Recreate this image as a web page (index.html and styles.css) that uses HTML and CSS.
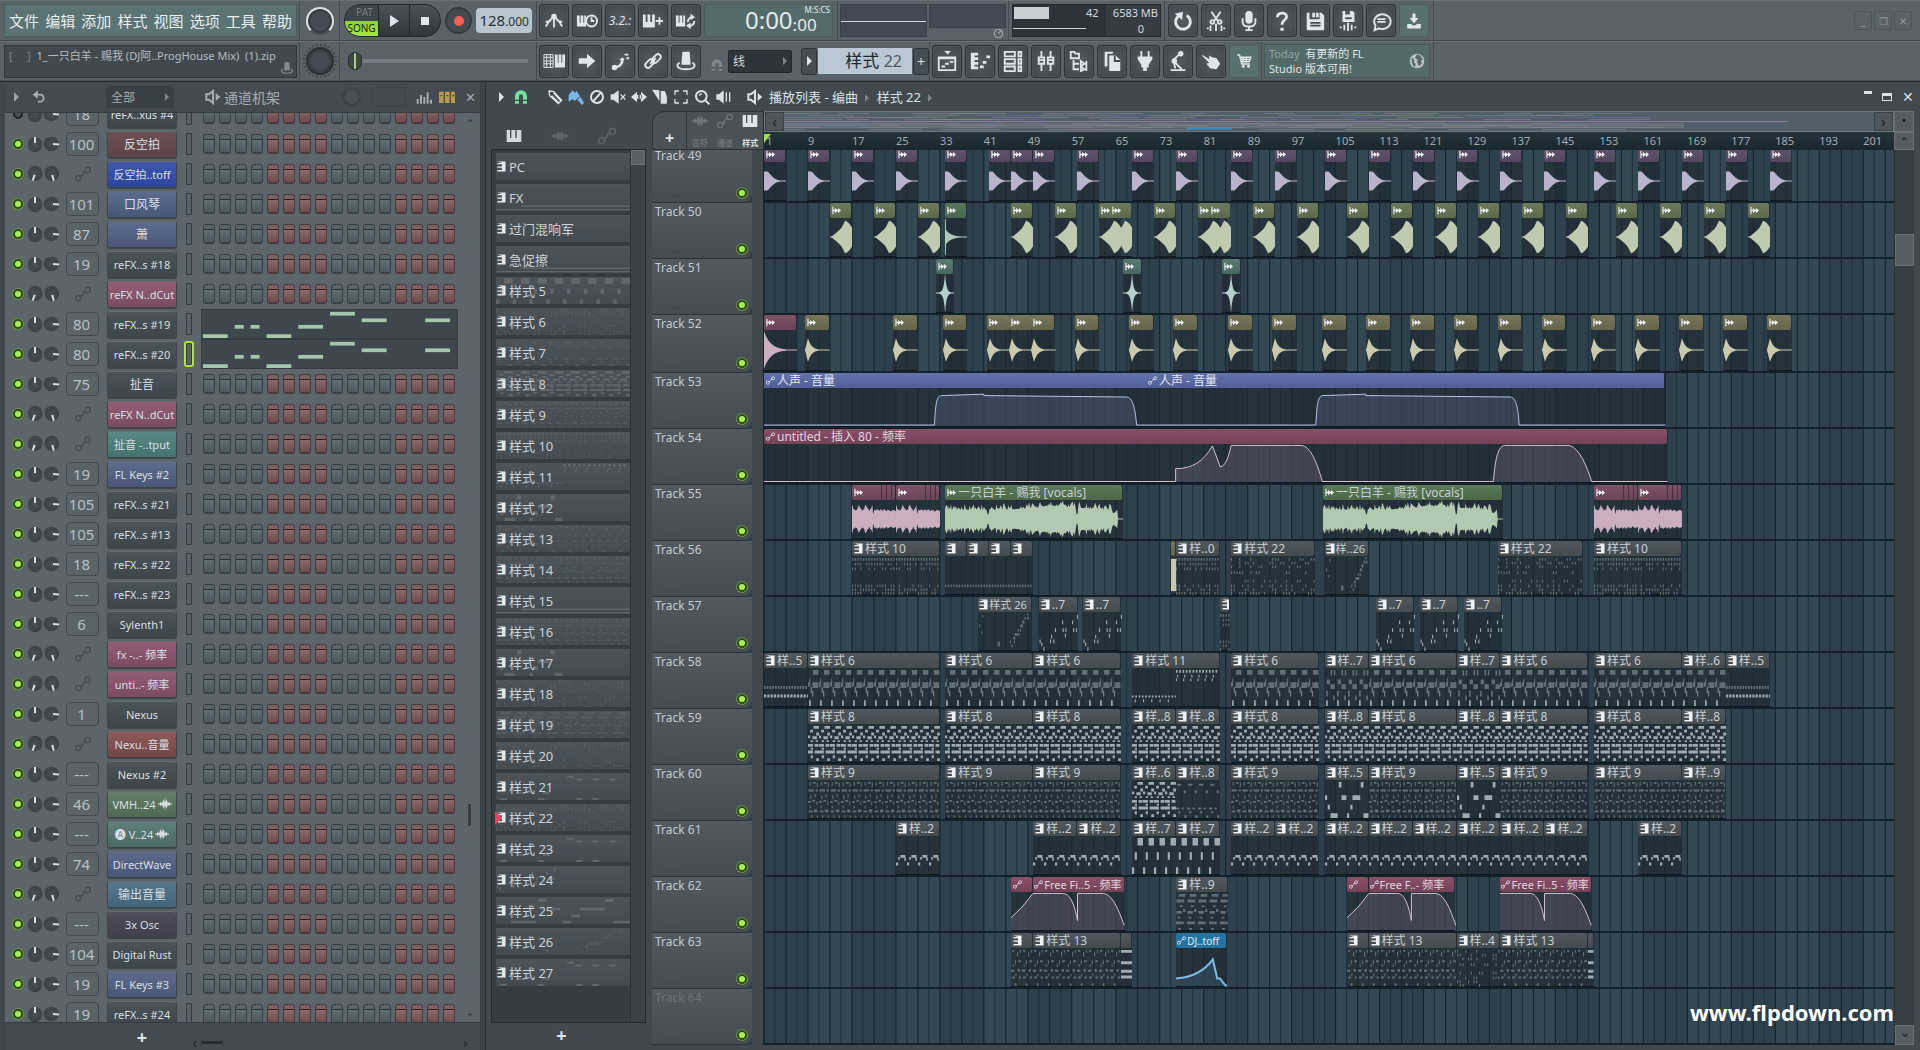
FILE: index.html
```
<!DOCTYPE html>
<html lang="zh-CN">
<head>
  <meta charset="UTF-8" />
  <meta name="viewport" content="width=device-width, initial-scale=1.0"/>
  <title>FL Studio</title>
  <link rel="stylesheet" href="styles.css">
</head>
<body>

<!-- icon sprite -->
<svg class="sprite" aria-hidden="true">
  <symbol id="i-metronome" viewBox="0 0 24 24"><path class="l" d="M12 5v14M12 7C8 10 5 14 3 18M12 7c4 3 7 7 9 11M3 13l5-1M16 12l5 1"/><circle cx="12" cy="7" r="3"/></symbol>
  <symbol id="i-wait" viewBox="0 0 24 24"><path d="M1 6h3v8h1V6h3v8h1V6h2v12H1z"/><circle class="l" cx="17" cy="12" r="6"/><path class="l" d="M17 8v4h3"/></symbol>
  <symbol id="i-pianoplus" viewBox="0 0 24 24"><path d="M1 5h3v8h2V5h3v8h2V5h3v14H1zM18 8h2v3h3v2h-3v3h-2v-3h-3v-2h3z"/></symbol>
  <symbol id="i-pianoloop" viewBox="0 0 24 24"><path d="M1 6h3v8h1V6h3v8h1V6h2v12H1z"/><path class="l" d="M20 8a5 5 0 0 0-6 5M14 17a5 5 0 0 0 7-5"/><path d="M17 4l5 4-5 3zM17 14l-5 3 5 4z"/></symbol>
  <symbol id="i-typing" viewBox="0 0 24 24"><path d="M13 5h3v9h1V5h3v9h1V5h3v14H13z"/><path class="t" d="M1 5h10v14H1zM1 8h10M1 12h10M1 15h10M4 5v14M8 5v14"/></symbol>
  <symbol id="i-right" viewBox="0 0 24 24"><path d="M3 9h9V4l9 8-9 8v-5H3z"/></symbol>
  <symbol id="i-slide" viewBox="0 0 24 24"><path d="M4 18c5 0 9-2 9-7h-2l4-3 2 3h-1c0 6-5 9-10 10z"/><circle cx="6" cy="19" r="3"/><path d="M17 4h4v2h-4zM19 8h3v2h-3z"/></symbol>
  <symbol id="i-link" viewBox="0 0 24 24"><g class="l"><rect x="3" y="12" width="11" height="6" rx="3" transform="rotate(-45 8 15)"/><rect x="10" y="6" width="11" height="6" rx="3" transform="rotate(-45 16 9)"/><path d="M9 15l6-6"/></g></symbol>
  <symbol id="i-pedal" viewBox="0 0 24 24"><path d="M8 2h8l1 14H7z"/><path class="l" d="M5 14c-5 3-2 7 7 7s12-4 7-7"/></symbol>
  <symbol id="i-playlist" viewBox="0 0 24 24"><path d="M9 1h7l-3 4zM3 8h18v2H3zM6 17h4v2H6zM10 14h4v2h-4zM15 12h4v2h-4z"/><path class="l" d="M3 8h18v14H3z"/></symbol>
  <symbol id="i-roll" viewBox="0 0 24 24"><path d="M2 3h8v3H6v2h4v3H6v2h4v3H6v2h4v3H2zM12 17h4v3h-4zM15 12h4v3h-4zM19 6h4v3h-4z"/></symbol>
  <symbol id="i-rack" viewBox="0 0 24 24"><path class="l" d="M3 2h11v5H3zM3 10h11v5H3zM3 18h11v5H3zM18 2h3v5h-3zM18 10h3v5h-3zM18 18h3v5h-3z"/></symbol>
  <symbol id="i-mixer" viewBox="0 0 24 24"><path class="l" d="M7 1v7M7 15v8M17 1v7M17 15v8M4 8h6v7H4zM14 8h6v7h-6zM4 11h6M14 11h6"/></symbol>
  <symbol id="i-browser" viewBox="0 0 24 24"><path class="l" d="M3 2h4l1 2h4v5H3zM6 11v10h6M6 15h6M14 12v6l4-3zM20 12v6M14 18v5l4-2zM20 18v5"/></symbol>
  <symbol id="i-files" viewBox="0 0 24 24"><path d="M4 2h9v2H7v14H4z"/><path d="M9 6h7l5 5v12H9z"/><path class="k" d="M15 6v6h6"/></symbol>
  <symbol id="i-plug" viewBox="0 0 24 24"><path d="M7 1h2v6h6V1h2v6h3v3l-4 6v3h-2v4h-4v-4H8v-3l-4-6V7h3z"/></symbol>
  <symbol id="i-lamp" viewBox="0 0 24 24"><path class="l" d="M4 22h16M9 20L7 11l6-6M8 13l8 8"/><circle cx="15" cy="4" r="3"/><circle cx="8" cy="12" r="3"/></symbol>
  <symbol id="i-hand" viewBox="0 0 24 24"><path d="M2 5l8 5V6l3 2 5 1 4 6-4 6-7-1-4-5 3-1-7-7z"/></symbol>
  <symbol id="i-cart" viewBox="0 0 24 24"><path class="l" d="M3 4h3l3 12h11M7 7h14l-2 6H9M11 7v6M15 7v6M8 10h12"/><circle cx="11" cy="19" r="2"/><circle cx="18" cy="19" r="2"/></symbol>
  <symbol id="i-undo" viewBox="0 0 24 24"><path class="w" d="M8 6a8 8 0 1 0 8 0"/><path d="M3 4l9-2-1 9z"/></symbol>
  <symbol id="i-cut" viewBox="0 0 24 24"><path class="l" d="M7 2l7 10M17 2l-7 10M3 19v2M6 17v6M12 15v8M18 17v6M21 19v2"/><circle class="l" cx="8" cy="13" r="2"/><circle class="l" cx="16" cy="13" r="2"/></symbol>
  <symbol id="i-mic" viewBox="0 0 24 24"><rect x="8" y="1" width="8" height="14" rx="4"/><path class="l" d="M5 9v4q0 5 7 5t7-5V9M12 18v4M8 22h8"/></symbol>
  <symbol id="i-help" viewBox="0 0 24 24"><path class="w" d="M7 8c0-6 10-6 10-1 0 4-5 4-5 9"/><circle cx="12" cy="21" r="2"/></symbol>
  <symbol id="i-save" viewBox="0 0 24 24"><path d="M3 3h3v7h11V3h2l3 3v16H3z"/><path d="M9 3h3v5H9zM13 3h3v5h-3z"/><path class="k" d="M7 14h11M7 17h11"/></symbol>
  <symbol id="i-savenew" viewBox="0 0 24 24"><path d="M6 1h3v4h5V1h3l2 2v10H6z"/><path class="k" d="M9 9h7"/><path class="l" d="M4 18v2M8 16v6M12 14v9M16 16v6M20 18v2"/></symbol>
  <symbol id="i-chat" viewBox="0 0 24 24"><path class="l" d="M5 22l1-5a9 8 0 1 1 4 3zM8 10h9M8 13h9"/></symbol>
  <symbol id="i-download" viewBox="0 0 24 24"><path d="M10 2h4v6h4l-6 7-6-7h4zM3 16h5q4 4 8 0h5v6H3z"/></symbol>
  <symbol id="i-magnet" viewBox="0 0 24 24"><path d="M3 22V11a9 9 0 0 1 18 0v11h-6V11a3 3 0 0 0-6 0v11z"/><path class="k" d="M3 17h6M15 17h6"/></symbol>
  <symbol id="i-pencil" viewBox="0 0 24 24"><path class="l" d="M3 3l7 1 12 13-5 5L4 10zM7 10l11 11M10 6l11 12"/></symbol>
  <symbol id="i-brush" viewBox="0 0 24 24"><path d="M1 9l6-7 3 4 3-3 5 8-8 7-3-3-6 4zM14 16l5-4 5 9-3 3z"/></symbol>
  <symbol id="i-no" viewBox="0 0 24 24"><circle class="w" cx="12" cy="12" r="9"/><path class="w" d="M6 19L18 5"/></symbol>
  <symbol id="i-mute" viewBox="0 0 24 24"><path d="M1 8h4l8-6v20l-8-6H1z"/><path class="l" d="M16 8l7 8M23 8l-7 8"/></symbol>
  <symbol id="i-slip" viewBox="0 0 24 24"><path d="M0 12l9-8v16zM24 12l-9-8v16zM8 9h3v6H8zM13 9h3v6h-3z"/></symbol>
  <symbol id="i-slice" viewBox="0 0 24 24"><path d="M0 1l11 1v16zM13 3h6q5 8 3 19h-9z"/></symbol>
  <symbol id="i-select" viewBox="0 0 24 24"><path class="l" d="M3 9V3h6M15 3h6v6M21 15v6h-6M9 21H3v-6"/></symbol>
  <symbol id="i-zoom" viewBox="0 0 24 24"><circle class="w" cx="11" cy="11" r="8"/><path class="w" d="M17 17l6 6"/><path class="l" d="M8 10q1-3 4-3"/></symbol>
  <symbol id="i-playback" viewBox="0 0 24 24"><path d="M2 8h4l7-6v20l-7-6H2z"/><path class="l" d="M17 5v14M22 5v14"/></symbol>
  <symbol id="i-speaker" viewBox="0 0 24 24"><path class="w" d="M2 8h4l6-5v18l-6-5H2z"/><path d="M16 6l7 6-7 6z"/></symbol>
  <symbol id="i-back" viewBox="0 0 24 24"><path class="w" d="M5 8h9a5 5 0 0 1 0 12h-4"/><path d="M10 1v14L1 8z"/></symbol>
  <symbol id="i-bars" viewBox="0 0 24 24"><path d="M1 15h3v7H1zM6 9h3v13H6zM11 12h3v10h-3zM16 5h3v17h-3zM21 16h3v6h-3z"/></symbol>
  <symbol id="i-steps" viewBox="0 0 24 24"><path d="M0 4h7v17H0zM9 4h7v17H9zM18 4h6v17h-6z"/><path class="k" d="M2 10h3M11 10h3M20 10h3"/></symbol>
  <symbol id="i-piano" viewBox="0 0 24 24"><path d="M1 3h5v12h2V3h6v12h2V3h7v18H1z"/></symbol>
  <symbol id="i-wave" viewBox="0 0 24 24"><path d="M0 11h3l2-3 2 3 2-7 2 5 1-8 1 8 2-5 2 7 2-3 2 3h3v2h-3l-2 3-2-3-2 7-2-5-1 8-1-8-2 5-2-7-2 3-2-3H0z"/></symbol>
  <symbol id="i-auto" viewBox="0 0 24 24"><circle class="l" cx="5" cy="18" r="4"/><circle class="l" cx="19" cy="6" r="4"/><path class="l" d="M7 16q4 0 5-4t5-4"/></symbol>
  <symbol id="i-pat" viewBox="0 0 20 24"><path d="M1 1h18v22H1v-3h10v-5H1v-3h10V7H1V4h10z"/></symbol>
  <symbol id="i-clip" viewBox="0 0 24 24"><path d="M1 2h3v8h4V5l6 5h2V5l8 7-8 7v-5h-2l-6 5v-5H4v8H1z"/></symbol>
  <symbol id="i-dial" viewBox="0 0 24 24"><circle class="w" cx="12" cy="12" r="9"/><path class="w" d="M12 12l5-6"/></symbol>
  <symbol id="i-globe" viewBox="0 0 24 24"><circle cx="12" cy="12" r="11"/><path class="land" d="M12 2l5 2 4 6-3 1 1 5-4 4-3-7 1-3-4-3zM4 7l4 3-1 3 3 4-1 4q-6-4-5-14z"/></symbol>
</svg>

<header class="toolbar">
  <div class="bar-row">
    <div class="group g-menu">
      <nav class="menu">
        <button>文件</button><button>编辑</button><button>添加</button><button>样式</button><button>视图</button><button>选项</button><button>工具</button><button>帮助</button>
      </nav>
    </div>
    <div class="group g-knob"><span class="dial dial-ring"></span></div>
    <div class="group g-transport">
      <div class="transport">
        <button class="patsong"><span class="pat">PAT</span><span class="song">SONG</span></button>
        <button class="tbtn" aria-label="play"><span class="tri"></span></button>
        <button class="tbtn" aria-label="stop"><span class="sq"></span></button>
      </div>
      <button class="rec" aria-label="record"><span></span></button>
      <div class="tempo"><b>128</b>.000</div>
    </div>
    <div class="group g-time">
      <button class="ib" aria-label="metronome"><svg><use href="#i-metronome"/></svg></button>
      <button class="ib" aria-label="wait"><svg><use href="#i-wait"/></svg></button>
      <button class="ib count">3.2.:</button>
      <button class="ib" aria-label="step edit"><svg><use href="#i-pianoplus"/></svg></button>
      <button class="ib" aria-label="loop record"><svg><use href="#i-pianoloop"/></svg></button>
      <div class="clock"><span class="big">0:00</span><span class="sub"><span class="unit">M:S:CS</span><span class="small">:00</span></span></div>
    </div>
    <div class="group g-scope"><div class="scope"></div><div class="scope-side"><div class="scope2"></div><svg><use href="#i-dial"/></svg></div></div>
    <div class="group g-cpu">
      <div class="cpu">
        <div class="cpu-graph"><i></i></div>
        <div class="cpu-load">42</div>
        <div class="cpu-mem"><span>6583 MB</span><span>0</span></div>
      </div>
    </div>
    <div class="group g-tools">
      <button class="ib" aria-label="undo"><svg><use href="#i-undo"/></svg></button>
      <button class="ib" aria-label="cut"><svg><use href="#i-cut"/></svg></button>
      <button class="ib" aria-label="record audio"><svg><use href="#i-mic"/></svg></button>
      <button class="ib" aria-label="help"><svg><use href="#i-help"/></svg></button>
      <button class="ib" aria-label="save"><svg><use href="#i-save"/></svg></button>
      <button class="ib" aria-label="save new"><svg><use href="#i-savenew"/></svg></button>
      <button class="ib" aria-label="about"><svg><use href="#i-chat"/></svg></button>
      <button class="ib teal" aria-label="download"><svg><use href="#i-download"/></svg></button>
    </div>
    <div class="win-btns">
      <button aria-label="minimize">_</button><button aria-label="restore">❐</button><button aria-label="close">✕</button>
    </div>
  </div>

  <div class="bar-row">
    <div class="group g-menu">
      <div class="hint"><span class="dim">[&nbsp;&nbsp;&nbsp;&nbsp;&nbsp;]</span>1_一只白羊 - 赐我 (DJ阿..ProgHouse Mix)&nbsp; (1).zip<svg><use href="#i-pedal"/></svg></div>
    </div>
    <div class="group g-knob"><span class="dial dial-dots"></span></div>
    <div class="group g-transport"><input class="pos" type="range" min="0" max="100" value="0" aria-label="song position"></div>
    <div class="group g-pattern">
      <button class="ib" aria-label="typing keyboard"><svg><use href="#i-typing"/></svg></button>
      <button class="ib" aria-label="step"><svg><use href="#i-right"/></svg></button>
      <button class="ib" aria-label="slide"><svg><use href="#i-slide"/></svg></button>
      <button class="ib" aria-label="link"><svg><use href="#i-link"/></svg></button>
      <button class="ib" aria-label="multilink"><svg><use href="#i-pedal"/></svg></button>
      <svg class="snap-icon"><use href="#i-magnet"/></svg>
      <div class="drop"><select class="snap" aria-label="snap"><option>线</option></select><i class="tri xs"></i></div>
      <button class="nudge" aria-label="pattern menu"><span class="tri s"></span></button>
      <div class="pattern-name">样式 <span>22</span></div>
      <button class="nudge plus">+</button>
    </div>
    <div class="group g-views">
      <button class="ib" aria-label="playlist"><svg><use href="#i-playlist"/></svg></button>
      <button class="ib" aria-label="piano roll"><svg><use href="#i-roll"/></svg></button>
      <button class="ib" aria-label="channel rack"><svg><use href="#i-rack"/></svg></button>
      <button class="ib" aria-label="mixer"><svg><use href="#i-mixer"/></svg></button>
      <button class="ib" aria-label="browser"><svg><use href="#i-browser"/></svg></button>
      <button class="ib" aria-label="files"><svg><use href="#i-files"/></svg></button>
      <button class="ib" aria-label="plugins"><svg><use href="#i-plug"/></svg></button>
      <button class="ib" aria-label="tempo tapper"><svg><use href="#i-lamp"/></svg></button>
      <button class="ib" aria-label="touch"><svg><use href="#i-hand"/></svg></button>
      <button class="ib teal" aria-label="shop"><svg><use href="#i-cart"/></svg></button>
    </div>
    <div class="group g-news">
      <a class="news" href="#"><span><em>Today</em>&nbsp; 有更新的 FL<br>Studio 版本可用!</span><svg><use href="#i-globe"/></svg></a>
    </div>
  </div>
</header>

<main class="workspace">
  <section class="rack">
    <div class="rack-head">
      <span class="tri s dim"></span>
      <svg class="back"><use href="#i-back"/></svg>
      <div class="drop"><select class="filter" aria-label="channel filter"><option>全部</option></select><i class="tri xs"></i></div>
      <svg class="spk"><use href="#i-speaker"/></svg>
      <h2>通道机架</h2>
      <span class="swing"></span>
      <span class="swing-box"></span>
      <svg><use href="#i-bars"/></svg>
      <svg class="gold"><use href="#i-steps"/></svg>
      <button class="x" aria-label="close">✕</button>
    </div>
    <div class="rack-body">
      <div class="channels" id="channels"></div>
      <div class="vscroll"><span>⌃</span><i></i><span>⌄</span></div>
    </div>
    <div class="rack-foot">
      <button class="add" aria-label="add channel">+</button>
      <div class="hscroll"><span>‹</span><i></i><span>›</span></div>
    </div>
  </section>

  <section class="playlist">
    <div class="pl-head">
      <span class="tri s"></span>
      <svg class="green"><use href="#i-magnet"/></svg>
      <div class="pl-tools">
        <svg><use href="#i-pencil"/></svg><svg class="blue"><use href="#i-brush"/></svg><svg><use href="#i-no"/></svg><svg><use href="#i-mute"/></svg><svg><use href="#i-slip"/></svg><svg><use href="#i-slice"/></svg><svg><use href="#i-select"/></svg><svg><use href="#i-zoom"/></svg><svg><use href="#i-playback"/></svg>
      </div>
      <svg><use href="#i-speaker"/></svg>
      <h2>播放列表 - 编曲 <i class="tri xs"></i> 样式 22 <i class="tri xs"></i></h2>
      <div class="pl-win"><button class="min" aria-label="minimize"></button><button class="max" aria-label="maximize"></button><button aria-label="close">✕</button></div>
    </div>
    <div class="pl-body">
      <aside class="picker">
        <div class="picker-tabs"><svg><use href="#i-piano"/></svg><svg class="off"><use href="#i-wave"/></svg><svg class="off"><use href="#i-auto"/></svg></div>
        <div class="picker-box">
          <ul id="patterns"></ul>
          <div class="picker-scroll"><i></i></div>
        </div>
        <button class="add" aria-label="add pattern">+</button>
      </aside>

      <div class="arrange">
        <div class="corner">
          <button class="add" aria-label="add track">+</button>
          <div class="modes">
            <span><svg><use href="#i-wave"/></svg>音符</span>
            <span><svg><use href="#i-auto"/></svg>通道</span>
            <span class="on"><svg><use href="#i-piano"/></svg>样式</span>
          </div>
        </div>
        <div class="minimap"><button>‹</button><div class="map" id="map"></div><button>›</button></div>
        <div class="cap dot">•</div>
        <div class="ruler" id="ruler"></div>
        <div class="cap">⌃</div>
        <div class="tracks"><div class="track-list" id="tracks"></div></div>
        <div class="tscroll"><i></i><span>⌄</span></div>
        <div class="watermark">www.flpdown.com</div>
      </div>
    </div>
  </section>
</main>

<script src="app.js"></script>
</body>
</html>
```
FILE: styles.css
```
* { box-sizing: border-box; }

body {
    margin: 0;
    min-height: 100vh;
    display: flex;
    flex-direction: column;
    background: #3c444a;
    color: #d3d9dc;
    font-family: "Noto Sans", "Noto Sans CJK SC", sans-serif;
    font-size: 12px;
    overflow: hidden;
}

button, select, input {
    font: inherit;
    color: inherit;
    border: 0;
    padding: 0;
    margin: 0;
    background: none;
}

h2 { margin: 0; font-size: 14px; font-weight: 400; white-space: nowrap; }
ul { margin: 0; padding: 0; list-style: none; }

svg { width: 16px; height: 16px; fill: currentColor; flex: none; }
.sprite { position: absolute; width: 0; height: 0; }
.l { fill: none; stroke: currentColor; stroke-width: 2; }
.t { fill: none; stroke: currentColor; stroke-width: 1; }
.w { fill: none; stroke: currentColor; stroke-width: 3; }
.k { fill: none; stroke: #444c52; stroke-width: 2; }
.land { fill: #56696a; }

.tri {
    display: inline-block;
    border-left: 9px solid #dfe5e8;
    border-top: 6px solid transparent;
    border-bottom: 6px solid transparent;
}
.tri.s { border-width: 5px 0 5px 5px; }
.tri.xs { border-width: 4px 0 4px 4px; border-left-color: #7c868c; margin: 0 4px; }
.tri.dim { border-left-color: #9aa2a6; }
.sq { width: 8px; height: 8px; background: #dfe5e8; }
.add { color: #e3e8ea; font-size: 18px; line-height: 18px; font-weight: 700; }

/* dropdown with its arrow inside the box */
.drop { display: flex; align-items: center; background: #2d343a; border: 1px solid #22282c; border-radius: 2px; flex: none; }
.drop select { appearance: none; flex: 1; min-width: 0; padding-left: 4px; font-size: 12px; }

/* ---------- top toolbar ---------- */
.toolbar { background: #5a6269; border-bottom: 1px solid #272d32; }
.bar-row { display: flex; height: 41px; border-top: 1px solid #687077; border-bottom: 1px solid #434b51; }
.bar-row + .bar-row { height: 40px; }
.group { display: flex; align-items: center; gap: 3px; padding: 0 0 0 2px; border-right: 1px solid #434b51; flex: none; }
.g-menu { width: 300px; padding: 0 2px 0 4px; }
.g-knob { width: 40px; justify-content: center; padding: 0; }
.g-transport { width: 197px; padding: 0 4px; gap: 4px; }
.g-time { width: 301px; }
.g-scope { width: 171px; align-items: flex-start; padding-top: 3px; gap: 2px; }
.g-cpu { width: 156px; padding: 0 3px; }
.g-tools { width: 269px; padding-left: 3px; }
.g-pattern { width: 393px; }
.g-views { width: 332px; }
.g-news { width: 172px; }

.menu {
    display: flex;
    justify-content: space-between;
    width: 293px;
    height: 33px;
    padding: 0 4px;
    background: #5b7375;
    border: 1px solid #4a5e61;
    font-size: 15px;
    color: #e9eeef;
}
.hint {
    display: flex;
    width: 293px;
    height: 33px;
    padding: 1px 2px 1px 4px;
    background: #41494f;
    border: 1px solid #2f363b;
    color: #b4bcc0;
    font-size: 11px;
    white-space: pre;
    line-height: 18px;
}
.hint .dim { color: #7b8489; margin-right: 6px; }
.hint svg { margin-left: auto; width: 14px; align-self: flex-end; color: #868e93; }

.dial { width: 28px; height: 28px; border-radius: 50%; background: radial-gradient(circle, #434c54 55%, #363e45 58%); border: 2px solid #2b3238; }
.dial-ring { border: 2px solid #dde4e7; border-bottom-color: #495157; }
.dial-dots { outline: 2px dotted #424a50; outline-offset: 1px; }

.transport { display: flex; width: 98px; height: 33px; border: 1px solid #23292d; border-radius: 16px; overflow: hidden; background: linear-gradient(#4a5359, #2f363b); }
.patsong { display: flex; flex-direction: column; width: 33px; background: #3d454b; font-size: 10px; line-height: 15px; }
.pat { color: #767e83; width: 33px; height: 16px; padding-left: 6px; }
.song { background: linear-gradient(#8bcf3e, #a9e653); color: #18220a; width: 33px; height: 16px; }
.tbtn { flex: 1; display: flex; align-items: center; justify-content: center; border-left: 1px solid #23292d; }
.rec { width: 27px; height: 27px; border-radius: 50%; background: #434b51; border: 2px solid #33393e; display: flex; align-items: center; justify-content: center; }
.rec span { width: 10px; height: 10px; border-radius: 50%; background: #f0625a; }
.tempo { width: 56px; height: 25px; margin-left: auto; border-radius: 4px; background: #b9c6d0; color: #2a3238; font-size: 12px; line-height: 24px; text-align: center; }
.tempo b { font-size: 15px; font-weight: 400; }

.ib {
    width: 30px;
    height: 33px;
    display: flex;
    align-items: center;
    justify-content: center;
    border: 1px solid #2d3338;
    border-radius: 3px;
    background: radial-gradient(#535c63, #3e464c);
    color: #e0e6e9;
    box-shadow: inset 0 0 0 1px #4b545a;
}
.ib svg { width: 22px; height: 22px; }
.ib.teal { background: #58706f; border-color: #4c6061; box-shadow: none; }
.ib.count { font-size: 12px; font-style: italic; }
.ib.teal svg { width: 18px; height: 18px; }

.clock { display: flex; justify-content: flex-end; width: 129px; height: 33px; padding-right: 2px; background: #546a6b; border: 1px solid #4a5e60; white-space: nowrap; color: #e3eaeb; }
.clock .big { font-size: 24px; line-height: 30px; }
.clock .sub { display: flex; flex-direction: column; }
.clock .unit { font-size: 8px; line-height: 10px; text-align: right; padding-left: 12px; }
.clock .small { font-size: 17px; line-height: 19px; }

.scope { width: 87px; height: 33px; background: linear-gradient(#414a52 16px, #d0d8dc 16px, #d0d8dc 17px, #414a52 17px); border: 1px solid #394148; }
.scope-side { display: flex; flex-direction: column; align-items: flex-end; }
.scope-side svg { width: 11px; height: 11px; margin-right: 2px; color: #9ba3a7; }
.scope2 { width: 77px; height: 24px; background: #414a52; border: 1px solid #394148; }
.cpu { display: flex; width: 150px; height: 33px; background: #2c343a; border: 1px solid #23292d; font-size: 11px; }
.cpu-graph { flex: 1; padding: 2px 1px; background: linear-gradient(transparent 23px, #c8d0d4 23px, #c8d0d4 24px, transparent 24px); }
.cpu-graph i { display: block; width: 35px; height: 12px; background: #c9d0d4; }
.cpu-load { width: 20px; line-height: 16px; }
.cpu-mem { display: flex; flex-direction: column; width: 54px; text-align: right; line-height: 16px; background: #343d44; padding-right: 2px; white-space: nowrap; }
.cpu-mem span + span { padding-right: 14px; }

.win-btns { display: flex; gap: 2px; margin-left: auto; padding: 10px 8px 0 0; }
.win-btns button { width: 18px; height: 19px; border: 1px solid #4d555b; border-radius: 2px; color: #939b9f; font-size: 10px; line-height: 16px; }

.pos { appearance: none; width: 180px; height: 20px; margin-left: 4px; background: linear-gradient(transparent 8px, #737b81 8px, #737b81 12px, transparent 12px); }
.pos::-webkit-slider-thumb { appearance: none; width: 14px; height: 18px; border-radius: 7px; border: 1px solid #22282c; background: linear-gradient(90deg, #3d4a3d 5px, #a9cc8f 5px, #a9cc8f 7px, #3d4a3d 7px); }

.snap-icon { margin: 8px 2px 0 6px; color: #7d868b; width: 14px; }
.g-pattern .drop { width: 64px; height: 23px; margin-left: -1px; }
.nudge { width: 16px; height: 27px; margin-left: 6px; border: 1px solid #2d3338; border-radius: 3px; background: #454d54; display: flex; align-items: center; justify-content: center; }
.nudge.plus { margin: 0 0 0 -2px; font-size: 15px; }
.pattern-name { width: 94px; height: 26px; margin-left: -2px; background: #b9c9d4; color: #20272c; font-size: 17px; line-height: 25px; text-align: right; padding-right: 10px; }
.pattern-name span { color: #4d5961; font-size: 16px; }

.news { display: flex; justify-content: space-between; align-items: center; width: 166px; height: 34px; padding: 0 4px; border: 1px solid #45585a; background: #546a69; color: #dfe6e6; font-size: 11px; line-height: 15px; text-decoration: none; white-space: nowrap; }
.news em { font-style: normal; color: #93a3a3; }
.news svg { color: #b9c3c3; }

/* ---------- channel rack ---------- */
.workspace { flex: 1; display: flex; min-height: 0; }
.rack { width: 485px; flex: none; display: flex; flex-direction: column; border-left: 5px solid #3f474d; border-right: 5px solid #3c4449; background: #434b51; }
.rack-head { display: flex; align-items: center; height: 30px; color: #a5adb1; padding: 0 4px 0 9px; }
.rack-head .back { margin-left: 13px; width: 14px; }
.rack-head .drop { width: 68px; height: 22px; margin-left: 60px; background: #394045; border-color: #394045; }
.rack-head .spk { margin: 0 3px 0 31px; }
.swing { width: 20px; height: 20px; margin-left: 62px; border-radius: 50%; border: 3px solid #3b4348; background: #495157; }
.swing-box { width: 36px; height: 20px; margin: 0 10px; border: 1px solid #3a4147; border-radius: 5px; }
.rack-head .gold { color: #b59a4f; margin: 0 10px 0 7px; }
.x { font-size: 13px; }

.rack-body { flex: 1; display: flex; min-height: 0; overflow: hidden; background: #5c666a; border-top: 1px solid #353c41; }
.channels { width: 454px; height: 0; margin-top: -14px; }
.channel { display: flex; align-items: center; height: 30px; padding-left: 8px; }
.led { appearance: none; width: 10px; height: 10px; border-radius: 50%; border: 2px solid #2e4a20; background: #a6ef52; box-shadow: 0 0 0 1px #6b8f4c; flex: none; }
.led.off { background: #474f54; border-color: #20262a; box-shadow: none; }
.knob { width: 14px; height: 14px; margin-left: 5px; border-radius: 50%; background: radial-gradient(#4a5258, #333b41); box-shadow: 0 1px 1px #2d3338; display: flex; justify-content: center; flex: none; }
.knob + .knob { margin-left: 3px; }
.knob::before { content: ""; width: 2px; height: 6px; background: #d7dde0; }
.knob.r { transform: rotate(95deg); }
.knob.d { transform: rotate(200deg); }
.knob.e { transform: rotate(165deg); }
.mix { width: 33px; height: 24px; margin: 0 9px 0 7px; border: 1px solid #42494e; border-radius: 4px; text-align: center; color: #b7c0c4; background: #596368; font-size: 15px; padding-right: 2px; flex: none; }
.mix-link { width: 33px; margin: 0 9px 0 7px; color: #454d52; display: flex; justify-content: center; }
.name { width: 68px; height: 26px; border-radius: 2px; background: linear-gradient(#4a545a, #3c464b); box-shadow: 0 1px 1px 1px #3c4449, inset 0 1px 0 #656f74; color: #d9dfe2; font-size: 11px; white-space: nowrap; display: flex; align-items: center; justify-content: center; gap: 2px; flex: none; }
.name.cjk { font-size: 12px; }
.name svg { width: 14px; height: 14px; }
.name.brown { background: linear-gradient(#6e5053, #5b4346); }
.name.blue { background: linear-gradient(#4058b0, #2f459b); font-size: 11px; }
.name.slate { background: linear-gradient(#5d6b8c, #4a5878); }
.name.pink { background: linear-gradient(#935f77, #7b4a62); font-size: 11px; }
.name.teal { background: linear-gradient(#5a8a85, #44736f); font-size: 11px; }
.name.red { background: linear-gradient(#8e5b5b, #754646); font-size: 11px; }
.name.green { background: linear-gradient(#647f67, #4f6a51); }
.name.sea { background: linear-gradient(#5f817a, #4a6a63); }
.name.steel { background: linear-gradient(#56788e, #446479); }
.name.plum { background: linear-gradient(#504d5a, #413f4b); }
.sel { width: 6px; height: 22px; margin: 0 11px 0 10px; border: 1px solid #333a3f; background: #586166; border-radius: 1px; flex: none; }
.sel.on { outline: 2px solid #b2e04a; }
.steps { display: flex; gap: 4px; }
.step { width: 12px; height: 20px; border: 1px solid #394147; border-bottom-width: 2px; border-radius: 3px; background: linear-gradient(#59636a 4px, #27303a 4px, #27303a 5px, #616c73 5px, #4c5860); }
.step.hot { border-color: #493a3d; background: linear-gradient(#7a6162 4px, #381a20 4px, #381a20 5px, #8b6a69 5px, #6b4c4e); }
.roll { width: 257px; height: 30px; margin-left: -2px; background: #3e474d; border: 1px solid #353d43; fill: #a5c6ad; }

.vscroll { flex: 1; display: flex; flex-direction: column; align-items: center; justify-content: space-between; color: #2f373c; font-size: 12px; padding: 2px 0; position: relative; }
.vscroll i { position: absolute; top: 76%; width: 3px; height: 22px; background: #363d43; }
.rack-foot { display: flex; height: 29px; border-top: 1px solid #353c41; }
.rack-foot .add { width: 276px; }
.hscroll { width: 290px; display: flex; align-items: center; gap: 4px; margin-left: -86px; padding-top: 10px; color: #20262a; font-size: 14px; }
.hscroll i { width: 22px; height: 3px; background: #272e33; margin-right: 236px; }

/* ---------- playlist ---------- */
.playlist { flex: 1; min-width: 0; display: flex; flex-direction: column; background: #41494f; border-left: 1px solid #2a3035; padding-right: 6px; }
.pl-head { display: flex; align-items: center; height: 29px; padding-left: 13px; color: #dbe1e4; }
.pl-head .green { color: #6fe39b; margin: 0 25px 0 9px; }
.pl-head .blue { color: #77b7ee; }
.pl-tools { display: flex; gap: 5px; margin-right: 16px; margin-left: -7px; }
.pl-head h2 { margin-left: 6px; font-size: 13px; }
.pl-win { display: flex; align-items: center; gap: 10px; margin-left: auto; font-size: 14px; }
.pl-win button { width: 12px; }
.pl-win .min { width: 8px; height: 3px; margin-bottom: 8px; background: #dbe1e4; }
.pl-win .max { height: 8px; width: 10px; border: 1px solid #dbe1e4; border-top-width: 3px; }
.pl-body { flex: 1; display: flex; min-height: 0; }

.picker { width: 160px; flex: none; padding: 0 0 0 5px; display: flex; flex-direction: column; }
.picker-tabs { display: flex; align-items: center; gap: 29px; height: 38px; padding: 11px 0 0 15px; }
.picker-tabs .off { width: 18px; height: 18px; color: #5c656b; }
.picker-box { flex: 1; display: flex; justify-content: space-between; min-height: 0; border: 1px solid #23292e; background: #343d44; }
#patterns { width: 138px; padding: 3px 0 0 4px; }
.pattern { position: relative; display: flex; align-items: center; gap: 3px; height: 27px; margin-bottom: 4px; padding-left: 1px; background: linear-gradient(#4c545a, #434b51); color: #cdd3d6; font-size: 13px; }
.pattern .ico { width: 9px; height: 11px; color: #e3e8ea; }
.pattern .mini { position: absolute; left: 0; top: 0; width: 100%; height: 100%; fill: #8d969b; opacity: .35; }
.pattern.now::before { content: ""; position: absolute; left: -1px; z-index: 1; border-left: 7px solid #e8415a; border-top: 7px solid transparent; border-bottom: 7px solid transparent; }
.picker-scroll { width: 15px; background: #3b4248; border-left: 1px solid #2a3035; }
.picker-scroll i { display: block; height: 15px; background: #596167; border: 1px solid #6a7278; }
.picker > .add { height: 28px; padding-bottom: 4px; margin-right: 14px; }

.arrange { position: relative; flex: 1; min-width: 0; display: grid; grid-template-columns: 112px 1fr 20px; grid-template-rows: 21px 18px 1fr; margin: 0 0 6px 6px; }
.corner { grid-row: 1 / 3; display: flex; background: #4a5258; border-top-left-radius: 12px; border: 1px solid #2b3136; }
.corner .add { width: 34px; padding-top: 14px; border-right: 1px solid #2b3136; font-size: 16px; }
.modes { flex: 1; display: flex; justify-content: space-around; font-size: 8px; font-weight: 700; line-height: 12px; color: #6d767b; padding-top: 1px; }
.modes span { display: flex; flex-direction: column; align-items: center; justify-content: space-between; }
.modes .on { color: #dfe5e8; }
.minimap { display: flex; background: #516068; border: 1px solid #6c767b; }
.minimap button { width: 19px; background: #4d565c; border: 1px solid #394046; font-size: 14px; line-height: 14px; color: #161c20; }
.map { flex: 1; }
.map svg { width: 100%; height: 100%; display: block; }
.cap { background: #555d63; border: 1px solid #697177; color: #14191c; text-align: center; line-height: 18px; overflow: hidden; }
.ruler { position: relative; background: linear-gradient(#23323a, #1b272e); overflow: hidden; border-top: 1px solid #2c343a; }
.ruler span { position: absolute; top: 0; font-size: 11px; line-height: 16px; color: #a0acb2; }
.ruler::before { content: ""; position: absolute; left: 0; top: 1px; z-index: 1; border-top: 9px solid #a5dc4a; border-right: 7px solid transparent; }
.tracks { grid-column: 1 / 3; overflow: hidden; background: #2d404b; min-height: 0; }
.track-list { position: relative; margin-top: -3px; }
.grid { position: absolute; left: 112px; top: 0; width: calc(100% - 112px); height: 100%; }
.grid .band { fill: #344853; }
.grid path { stroke: #122029; stroke-width: 1; vector-effect: non-scaling-stroke; shape-rendering: crispEdges; }
.grid .soft { stroke: #1d2f3a; }
.track { position: relative; display: flex; height: 56px; }
.track.tall { height: 58px; }
.track-head { width: 100px; padding: 0 3px; background: linear-gradient(#525a60, #444c52); border-bottom: 1px solid #2c3338; border-radius: 0 0 8px 0; color: #c3c9cd; line-height: 17px; position: relative; }
.track-head .led { position: absolute; right: 5px; bottom: 4px; }
.track-head small { position: absolute; left: 18px; bottom: 0; color: #343b40; }
.track.empty .track-head { color: #6a7277; }
.gutter { width: 12px; background: #40484e; border-right: 1px solid #1b2329; }
.lane { position: relative; flex: 1; border-bottom: 2px solid #14212a; }

.clip { position: absolute; top: 0; bottom: 0; display: flex; flex-direction: column; background: #1f2930aa; border-bottom: 1px solid #10191f; }
.clip.over { background: none; }
.clip .tag { display: flex; align-items: center; gap: 2px; height: 15px; margin-right: 1px; padding-left: 2px; border-radius: 2px; overflow: hidden; background: linear-gradient(#50585d, #434b50); font-size: 12px; line-height: 14px; white-space: nowrap; color: #c9cfd3; flex: none; }
.clip .tag svg { width: 9px; height: 11px; color: #eef2f4; }
.clip .body { flex: 1; width: 100%; min-height: 0; fill: #9eabb1; overflow: visible; }
.dimn { opacity: .5; }
.clip.tight .tag { font-size: 11px; gap: 1px; padding-left: 1px; }
.clip.mauve .tag { background: linear-gradient(#63536c, #534860); }
.clip.mauve .body { fill: #b9b3cc; }
.clip.olive .tag { background: linear-gradient(#6b7a5a, #5a6a4c); }
.clip.olive .body { fill: #bfcbb1; }
.clip.sage .tag { background: linear-gradient(#57755d, #4b6751); }
.clip.sage .body { fill: #adcbb8; }
.clip.aqua .tag { background: linear-gradient(#5a7a72, #4a675f); }
.clip.aqua .body { fill: #b4d0cd; }
.clip.khaki .tag { background: linear-gradient(#77765a, #65654c); }
.clip.khaki .body { fill: #c8c9ad; }
.clip.rose .tag { background: linear-gradient(#7d5368, #6b4459); }
.clip.rose .body { fill: #caafc0; }
.clip.cut .tag { background: repeating-linear-gradient(90deg, #4d2d40 0 1px, transparent 1px 5px) right / 14px 100% no-repeat, linear-gradient(#7d5368, #6b4459); }
.clip.leaf .tag { background: linear-gradient(#5b7a56, #4b6848); }
.clip.leaf .body { fill: #b0c9b0; }
.clip.indigo .tag { background: linear-gradient(#6473ac, #515f99); border-radius: 0; color: #e4e8f4; }
.clip.wine .tag { background: linear-gradient(#8a5069, #73425a); color: #e2d5dc; }
.clip.azure .tag { background: #2573a3; color: #e2eef5; font-size: 10px; gap: 1px; padding-left: 1px; }
.clip .fill { stroke: none; fill: #c4a4c02e; }
.clip.indigo .fill { fill: #8aa7d22e; }
.clip.azure .fill { fill: #5aa2cc2e; }
.clip .line { fill: none; stroke: #d7bfd2; stroke-width: 1; vector-effect: non-scaling-stroke; }
.clip.indigo .line { stroke: #b5c4ea; }
.clip.azure .line { stroke: #7fbce4; stroke-width: 2; }

.tscroll { position: relative; background: #363d43; border-left: 1px solid #2a3035; display: flex; align-items: flex-end; }
.tscroll i { position: absolute; top: 84px; left: 0; right: 0; height: 32px; background: #565e64; border: 1px solid #697177; }
.tscroll span { width: 100%; height: 20px; background: #555d63; border: 1px solid #697177; text-align: center; line-height: 14px; color: #14191c; }
.watermark { position: absolute; right: 20px; bottom: 18px; color: #fff; font-weight: 700; font-size: 22px; line-height: 30px; text-shadow: 0 0 2px #26343c; }
```
FILE: app.js
```
const TOTAL_BARS = 205.6;
const pct = (bars) => (bars / TOTAL_BARS * 100) + '%';
const hasCjk = (s) => /[\u4e00-\u9fff]/.test(s);
const icon = (id, cls = '') => `<svg class="${cls}"><use href="#i-${id}"/></svg>`;

// repeatable noise for waveforms and note ticks
function noise(seed) {
  let s = seed * 7919 + 13;
  return () => {
    s = (s * 16807) % 2147483647;
    return s / 2147483647;
  };
}

/* ---------- channel rack ---------- */
// mixer track ('' = automation link), name, colour
const channels = [
  ['18', 'reFX..xus #4', ''], ['100', '反空拍', 'brown'], ['', '反空拍..toff', 'blue'],
  ['101', '口风琴', 'slate'], ['87', '萧', 'slate'], ['19', 'reFX..s #18', ''],
  ['', 'reFX N..dCut', 'pink'], ['80', 'reFX..s #19', '', 'roll'], ['80', 'reFX..s #20', '', 'roll sel'],
  ['75', '扯音', ''], ['', 'reFX N..dCut', 'pink'], ['', '扯音 -..tput', 'teal'],
  ['19', 'FL Keys #2', 'slate'], ['105', 'reFX..s #21', ''], ['105', 'reFX..s #13', ''],
  ['18', 'reFX..s #22', ''], ['---', 'reFX..s #23', ''], ['6', 'Sylenth1', ''],
  ['', 'fx -..- 频率', 'pink'], ['', 'unti..- 频率', 'pink'], ['1', 'Nexus', ''],
  ['', 'Nexu..音量', 'red'], ['---', 'Nexus #2', ''], ['46', 'VMH..24', 'green', 'wave'],
  ['---', '🅐 V..24', 'sea', 'wave'], ['74', 'DirectWave', 'slate'], ['', '输出音量', 'steel'],
  ['---', '3x Osc', 'plum'], ['104', 'Digital Rust', ''], ['19', 'FL Keys #3', 'slate'],
  ['19', 'reFX..s #24', '']
];

const rollNotes = [[1, 26, 25], [33, 16, 9], [49, 16, 9], [65, 26, 25], [97, 16, 25], [129, 2, 25], [161, 9, 25], [225, 9, 25]];

document.getElementById('channels').innerHTML = channels.map(([mix, name, color, flags = ''], i) => {
  const link = mix === '';
  const mixer = link
    ? `<span class="mix-link">${icon('auto')}</span>`
    : `<input class="mix" value="${mix}" aria-label="mixer track ${i}" readonly>`;
  let right;
  if (flags.includes('roll')) {
    right = `<svg class="roll" viewBox="0 0 257 30" preserveAspectRatio="none">${rollNotes.map(([x, y, w]) => `<rect x="${x}" y="${y}" width="${w}" height="4"/>`).join('')}</svg>`;
  } else {
    right = '<div class="steps">' + Array.from({ length: 16 }, (_, n) =>
      `<button class="step ${n % 8 > 3 ? 'hot' : ''}" aria-label="step ${n + 1}"></button>`).join('') + '</div>';
  }
  return `<div class="channel">
    <input type="checkbox" class="led ${i ? '' : 'off'}" aria-label="mute ${i}" ${i ? 'checked' : ''}>
    <span class="knob ${link ? 'd' : ''}"></span><span class="knob ${link ? 'e' : 'r'}"></span>
    ${mixer}
    <button class="name ${color} ${hasCjk(name) ? 'cjk' : ''}">${name}${flags.includes('wave') ? icon('wave') : ''}</button>
    <span class="sel ${flags.includes('sel') ? 'on' : ''}"></span>
    ${right}
  </div>`;
}).join('');

/* ---------- note drawings, x in bars, y in 0..40 ---------- */
const block = (x, y, w, h) => `M${x.toFixed(2)} ${y}h${w.toFixed(2)}v${h}h${(-w).toFixed(2)}z`;

function repeat(len, period, cells) {
  let d = '';
  for (let b = 0; b < len; b += period) {
    for (const [x, y, w, h] of cells) {
      if (b + x < len) d += block(b + x, y, Math.min(w, len - b - x), h);
    }
  }
  return d;
}

function ticks(len, rows, density, seed, w = 0.2) {
  const rnd = noise(seed);
  let d = '';
  for (const y of rows) {
    for (let x = 0; x < len; x += 0.5) if (rnd() < density) d += block(x, y, w, 3);
  }
  return d;
}

const notes = {
  5: (n) => [repeat(n, 0.5, [[0, 19, 0.3, 3]]), repeat(n, 0.6, [[0, 28, 0.4, 3]])],
  6: (n) => [repeat(n, 2, [[0.9, 2, 1, 5], [0.8, 15, 1.1, 6], [0.2, 11, 0.2, 8], [0, 15, 0.3, 5]]),
    repeat(n, 2, [[0.2, 34, 0.3, 6], [0.5, 20, 0.15, 6], [0.8, 24, 0.15, 6]])],
  7: (n) => ['', repeat(n, 2, [[1, 2, 1, 8], [0.5, 17, 0.4, 8], [0, 33, 0.4, 7]])],
  77: (n) => [repeat(n, 2, [[1, 2, 0.3, 6], [1.6, 2, 0.3, 6], [0.3, 12, 0.6, 5], [1, 17, 0.8, 5], [0.2, 24, 0.3, 6], [1.5, 29, 0.3, 5]]), repeat(n, 2, [[0.2, 34, 0.3, 6]])],
  8: (n) => ['', repeat(n, 2, [[1, 2, 1, 3], [0.4, 6, 0.5, 3], [1.5, 9, 0.5, 3], [0, 12, 0.4, 3], [0.8, 13, 0.8, 3],
    [0.5, 17, 0.4, 2], [1.4, 17, 0.4, 2], [0, 21, 0.9, 3], [1.2, 21, 0.7, 3], [0.5, 25, 0.4, 2], [0, 28, 0.9, 3], [1.2, 28, 0.8, 3], [0.5, 33, 0.4, 3], [1.5, 36, 0.5, 3]])],
  9: (n) => [repeat(n, 2, [[0.3, 2, 0.2, 4], [0.9, 2, 0.5, 2], [1.6, 3, 0.2, 4], [0.1, 10, 1, 2], [1.4, 10, 0.4, 2], [0.4, 16, 0.2, 4], [1.2, 15, 0.2, 3],
    [0, 22, 0.5, 2], [0.8, 21, 0.5, 2], [1.5, 23, 0.2, 3], [0.3, 27, 0.2, 3], [0.1, 32, 0.7, 2], [1.1, 31, 0.6, 3], [0.6, 37, 0.2, 3], [1.6, 37, 0.2, 3]]), ''],
  13: (n) => [repeat(n, 2, [[0.2, 2, 0.4, 2], [1.1, 4, 0.2, 5], [1.6, 2, 0.2, 3], [0.7, 13, 0.2, 4], [1.3, 13, 0.5, 2], [0.3, 17, 0.2, 3],
    [0, 23, 0.6, 2], [1.2, 22, 0.4, 3], [0.8, 27, 0.2, 3], [0.2, 30, 0.5, 2], [1.4, 30, 0.4, 2], [0.7, 37, 0.3, 3]]), ''],
  10: (n) => [repeat(n, 0.5, [[0, 2, 0.25, 3]]) + ticks(n, [7, 12, 30, 34, 38], 0.6, 10), ''],
  11: (n) => ['', repeat(n / 2, 0.6, [[0, 29, 0.3, 2]]) + repeat(n / 2, 1.5, [[0.5, 33, 0.2, 3]])
    + Array.from({ length: 13 }, (_, i) => block(n / 2 + i * 0.6, 2, 0.3, 3)).join('')
    + Array.from({ length: 6 }, (_, i) => block(n / 2 + i * 1.3 + 0.2, 7, 0.2, 3) + block(n / 2 + i * 1.3, 11, 0.2, 3)).join('')],
  22: (n) => [ticks(n, [2, 6, 10, 16, 25, 30, 34, 38], 0.4, 22), ''],
  2: (n) => ['', repeat(n, 2, [[0, 28, 0.4, 3], [0.4, 22, 0.3, 3], [0.8, 20, 0.9, 3], [1.5, 23, 0.3, 3]])],
  38: (n) => [repeat(n, 0.5, [[0, 30, 0.25, 3]]), ''],
  26: (n) => {
    const rnd = noise(26);
    let d = '';
    for (let i = 0; i < 22; i++) {
      const t = Math.round(rnd() * 8) / 8;
      d += block(n * (0.55 + t * 0.35 + rnd() * 0.08), Math.round(34 - t * 33), 0.2, 3);
    }
    return [d + block(n * 0.37, 31, 0.4, 5) + block(0.2, 13, 0.2, 3) + block(0.6, 20, 0.2, 3) + block(0.8, 3, 0.2, 3), ''];
  },
  27: () => ['', [[0.1, 29], [0.4, 32], [0.8, 37], [2, 29], [2.6, 29], [2.2, 24], [2.9, 17], [4.2, 9], [4.3, 17], [4.8, 17], [4.7, 23], [6, 9], [6.2, 17], [6.7, 17], [6.9, 3]].map(([x, y]) => block(x, y, 0.2, 4)).join('')],
  55: () => ['', [[2.5, 2, 0.5, 6], [6.5, 2, 0.5, 6], [0, 16, 0.4, 5], [3, 16, 0.9, 5], [5, 16, 1.4, 5], [0.5, 26, 0.4, 5], [4.6, 26, 0.4, 5], [1, 35, 1.3, 5], [4, 35, 0.4, 5], [7, 35, 0.9, 5]].map((c) => block(...c)).join('')],
  88: (n) => [repeat(n, 2, [[0.2, 4, 0.8, 2], [1.4, 11, 0.4, 3], [0, 29, 0.6, 2], [1, 29, 0.4, 2], [0.4, 33, 0.4, 2], [1.5, 37, 0.4, 3]]), ''],
  63: (n) => [repeat(n, 2, [[0.5, 2, 1.2, 3], [0.1, 8, 1.4, 3], [0.7, 14, 0.5, 2], [0.1, 20, 1, 3], [1.3, 18, 0.4, 3], [0.3, 26, 0.5, 2], [0, 31, 1.4, 3], [0.4, 38, 0.5, 2]]), ''],
  // long closing notes
  90: (n) => ['', [2, 14, 23, 29].map((y) => block(0, y, n, 3)).join('')],
  // sparse rows used only in the picker
  91: () => ['', [[2.4, 28], [5.6, 28], [8.5, 4], [9.5, 8], [11.5, 8], [13.5, 8], [0.5, 37], [5, 37], [9.5, 37], [11.5, 37]].map(([x, y]) => block(x, y, 0.8, 3)).join('')],
  92: () => ['', [[1.8, 35, 3], [8, 35, 1], [14, 35, 2], [9, 26, 1], [6.5, 16, 1.2], [10, 16, 3], [5, 3, 1], [13, 3, 1]].map(([x, y, w]) => block(x, y, w, 4)).join('')],
  93: () => ['', [[0, 37, 16], [3, 32, 13]].map(([x, y, w]) => block(x, y, w, 2)).join('')]
};

function noteSvg(kind, len, cls = 'body') {
  const [dim, lit] = notes[kind](len);
  return `<svg class="${cls}" viewBox="0 0 ${len} 40" preserveAspectRatio="none"><path class="dimn" d="${dim}"/><path d="${lit}"/></svg>`;
}

/* ---------- pattern picker ---------- */
const minis = { 2: 93, 4: 93, 5: 7, 6: 22, 7: 88, 8: 8, 9: 9, 10: 10, 11: 11, 12: 55, 13: 13, 14: 9, 15: 93, 16: 9, 17: 55, 18: 22, 19: 63, 20: 22, 21: 91, 22: 22, 23: 91, 24: 27, 25: 92, 26: 26, 27: 91 };
const names = ['PC', 'FX', '过门混响军', '急促擦'];
for (let n = 5; n <= 27; n++) names.push('样式 ' + n);
document.getElementById('patterns').innerHTML = names.map((name, i) =>
  `<li class="pattern ${i === 21 ? 'now' : ''}">${minis[i + 1] ? noteSvg(minis[i + 1], 16, 'mini') : ''}${icon('pat', 'ico')}<span>${name}</span></li>`).join('');

/* ---------- waveforms, box 100 x 40, centre line 20 ---------- */
function envelope(fn, steps = 60) {
  let top = '', bottom = '';
  for (let i = 0; i <= steps; i++) {
    const a = Math.max(fn(i / steps), 0.5);
    const x = (i / steps * 100).toFixed(1);
    top += `${i ? 'L' : 'M'}${x} ${(20 - a).toFixed(1)}`;
    bottom = `L${x} ${(20 + a).toFixed(1)}` + bottom;
  }
  return `<svg class="body" viewBox="0 0 100 40" preserveAspectRatio="none"><path d="${top}${bottom}Z"/></svg>`;
}

const waves = {
  kick: () => envelope((t) => t < 0.15 ? 10 : 10 * Math.exp(-Math.pow((t - 0.15) * 3.6, 1.4))),
  swell: () => envelope((t) => {
    if (t < 0.45) return 8 * Math.pow(t / 0.45, 1.3);
    if (t < 0.68) return 8 + 9 * Math.pow((t - 0.45) / 0.23, 1.3);
    return 17 - 7 * Math.pow((t - 0.68) / 0.32, 1.8);
  }),
  hit: () => envelope((t) => t < 0.05 ? 19 : 9 * Math.exp(-t * 4)),
  spike: () => envelope((t) => 19 * Math.exp(-Math.abs(t - 0.5) * 14) + 2 * Math.exp(-Math.abs(t - 0.5) * 4)),
  snap: () => envelope((t) => t < 0.12 ? 12 * t / 0.12 : 12 * Math.exp(-(t - 0.12) * 7)),
  decay: () => envelope((t) => 19 * Math.exp(-t * 5)),
  bar: () => envelope(() => 17, 4),
  beat: () => {
    const rnd = noise(5);
    return envelope((t) => {
      const peak = t < 0.47 ? 5 * Math.pow(Math.abs(Math.cos(t * 20)), 4) : 0;
      return Math.abs(t - 0.49) < 0.01 ? 5 : 8 + rnd() * 2.5 + peak;
    }, 80);
  },
  vocal: () => {
    const rnd = noise(8);
    return envelope((t) => {
      if (t > 0.97) return 0.5;
      if (Math.abs(t - 0.24) < 0.006 || Math.abs(t - 0.74) < 0.006) return 5;
      return 9 + 4 * Math.exp(-Math.pow((t - 0.62) * 5, 2)) + Math.pow(rnd(), 2) * 7 - (t > 0.93 ? 3 : 0);
    }, 180);
  }
};

/* ---------- automation curves, points in bars / 0..40 ---------- */
const curves = {
  volume: [164, 'M0 39H31C31.2 20 31.3 8 32.3 8L40 6.500V8L66 9.500C67 10 67.500 20 67.800 39H100.400C100.600 20 100.700 8 101.700 8L109.500 6.500V8L135.800 9.500C136.800 10 137.200 20 137.400 39H164'],
  freq: [164.4, 'M0 39.500H74.900V26C78 26 80 18 81.600 2L83 24C84 24 84.600 12 85 1.500H97.700C99.500 2 100.600 20 101.600 39.500H132.700C133 20 133.400 2 134.800 1.500H146.600C148.500 6 149.600 22 150.600 39.500H164.400'],
  rise: [4, 'M0 27L2 16L4 1.500'],
  dip: [16.6, 'M0 1.500H5.500C7 2 7.700 18 8.100 30V1.500H12.800C14.500 3 15.500 18 16.600 35'],
  cut: [9.3, 'M0 32C3 31 5.200 24 6.700 12L7.500 32H8L9 39.500H9.300']
};

function curveSvg(name) {
  const [len, d] = curves[name];
  return `<svg class="body" viewBox="0 0 ${len} 40" preserveAspectRatio="none"><path class="fill" d="${d}V40H0Z"/><path class="line" d="${d}"/></svg>`;
}

/* ---------- tracks ---------- */
const wave = (start, len, color, shape, label = '') => ({ start, len, color, label, ico: 'clip', body: waves[shape]() });
const auto = (start, len, color, curve, label = '') => ({ start, len, color, label, ico: 'auto', body: curve ? curveSvg(curve) : '' });
const pat = (start, end, kind, label = '', color = '') => ({ start, len: end - start, color, label, ico: 'pat', body: noteSvg(kind, end - start) });
const tail = (start, end, kind = 90) => ({ start, len: end - start, color: '', label: '', ico: '', body: noteSvg(kind, end - start) });

const sections = [[8, 32], [33, 49], [49, 65], [85, 101], [110, 126], [134, 150], [151, 167]];
const spans = (kind, label) => sections.map(([a, b]) => pat(a, b, kind, label));

const tracks = {
  49: [0, 8, 16, 24, 33, 41, 45, 49, 57, 67, 75, 85, 93, 102, 110, 118, 126, 134, 142, 151, 159, 167, 175, 183].map((b) => wave(b, 4, 'mauve', 'kick')),
  50: [12, 20, 28, 45, 53, 61, 63, 71, 79, 81, 89, 97, 106, 114, 122, 130, 138, 146, 155, 163, 171, 179]
    .map((b) => wave(b, 4, b === 63 || b === 81 ? 'olive over' : 'olive', 'swell')).concat(wave(33, 4, 'sage', 'hit')),
  51: [31.3, 65.4, 83.4].map((b) => wave(b, 3.3, 'aqua', 'spike')),
  52: [wave(0, 6, 'rose', 'decay')].concat([7.5, 23.5, 32.5, 40.5, 44.5, 48.5, 56.5, 66.5, 74.5, 84.5, 92.5, 101.5, 109.5, 117.5, 125.5, 133.5, 141.5, 150.5, 158.5, 166.5, 174.5, 182.5]
    .map((b) => wave(b, 4.5, 'khaki', 'snap'))),
  53: [auto(0, 164, 'indigo', 'volume', '人声 - 音量'), auto(69.5, 94.5, 'indigo over', '', '人声 - 音量')],
  54: [auto(0, 164.4, 'wine', 'freq', 'untitled - 插入 80 - 频率')],
  55: [wave(16, 8, 'rose cut', 'beat'), wave(24, 8, 'rose cut', 'beat'), wave(33, 32.4, 'leaf', 'vocal', '一只白羊 - 赐我 [vocals]'),
    wave(101.7, 32.7, 'leaf', 'vocal', '一只白羊 - 赐我 [vocals]'), wave(151, 8, 'rose cut', 'beat'), wave(159, 8, 'rose cut', 'beat')],
  56: [pat(16, 32, 10, '样式 10'), pat(33, 37, 38), pat(37, 41, 38), pat(41, 45, 38), pat(45, 49, 38),
    { start: 74, len: 1, color: 'khaki', label: '', ico: '', body: waves.bar() },
    pat(75, 83, 10, '样..0'), pat(85, 100.2, 22, '样式 22'), pat(102, 110, 26, '样..26', 'tight'), pat(133.5, 149, 22, '样式 22'), pat(151, 167, 10, '样式 10')],
  57: [pat(39, 48.7, 26, '样式 26', 'tight'), pat(50, 57.2, 27, '..7'), pat(58, 65, 27, '..7'), pat(83, 84.8, 10), pat(111.3, 118.3, 27, '..7'), pat(119.3, 126.3, 27, '..7'), pat(127.3, 134.3, 27, '..7')],
  58: [...spans(6, '样式 6'), pat(0, 8, 5, '样..5'), pat(67, 83, 11, '样式 11'), pat(102, 110, 77, '样..7'), pat(126, 134, 77, '样..7'), pat(167, 175, 6, '样..6'), pat(175, 183, 5, '样..5')],
  59: [...spans(8, '样式 8'), pat(67, 75, 8, '样..8'), pat(75, 83, 8, '样..8'), pat(102, 110, 8, '样..8'), pat(126, 134, 8, '样..8'), pat(167, 175, 8, '样..8')],
  60: [...spans(9, '样式 9'), pat(67, 75, 8, '样..6'), pat(75, 83, 88, '样..8'), pat(102, 110, 55, '样..5'), pat(126, 134, 55, '样..5'), pat(167, 175, 9, '样..9')],
  61: [...[24, 49, 57, 85, 93, 102, 110, 118, 126, 134, 142, 159].map((b) => pat(b, b + 8, 2, '样..2')), pat(67, 75, 7, '样..7'), pat(75, 83, 7, '样..7')],
  62: [auto(45, 4, 'wine', 'rise'), auto(49, 16.6, 'wine tight', 'dip', 'Free Fi..5 - 频率'), pat(75, 84.4, 63, '样..9'),
    auto(106, 4, 'wine', 'rise'), auto(110, 15.8, 'wine tight', 'dip', 'Free F..- 频率'), auto(134, 16.6, 'wine tight', 'dip', 'Free Fi..5 - 频率')],
  63: [pat(45, 49, 13), pat(49, 65, 13, '样式 13'), tail(65, 67), auto(75, 9.3, 'azure', 'cut', 'DJ..toff'),
    pat(106, 110, 13), pat(110, 126, 13, '样式 13'), pat(126, 134, 22, '样..4'), pat(134, 150, 13, '样式 13'), tail(150, 151)],
  64: []
};

const clipHtml = (c) => `<div class="clip ${c.color}" style="left:${pct(c.start)};width:${pct(c.len)}">
  <div class="tag">${c.ico ? icon(c.ico) : ''}<span>${c.label}</span></div>${c.body}</div>`;

let gridSvg = `<svg class="grid" viewBox="0 0 ${TOTAL_BARS} 100" preserveAspectRatio="none">`;
for (let b = 8; b < TOTAL_BARS; b += 16) gridSvg += `<rect class="band" x="${b}" y="0" width="8" height="100"/>`;
for (let b = 0; b < TOTAL_BARS; b += 2) gridSvg += `<path class="${b % 4 ? 'soft' : ''}" d="M${b} 0V100"/>`;
gridSvg += '</svg>';

document.getElementById('tracks').innerHTML = gridSvg + Object.entries(tracks).map(([n, clips]) =>
  `<div class="track ${n === '52' ? 'tall' : ''} ${clips.length ? '' : 'empty'}">
    <div class="track-head">Track ${n}<small>...</small><input type="checkbox" class="led" aria-label="track ${n}" checked></div>
    <div class="gutter"></div>
    <div class="lane">${clips.map(clipHtml).join('')}</div>
  </div>`).join('');

/* ---------- ruler and overview ---------- */
let ruler = '';
for (let b = 1; b <= 201; b += 8) ruler += `<span style="left:${pct(b === 1 ? 0.4 : b - 1)}">${b}</span>`;
document.getElementById('ruler').innerHTML = ruler;

const rnd = noise(4);
const tints = ['#8b7f93', '#87937f', '#6272a5', '#9f7d92', '#7e8a90', '#7a8b86'];
let map = '';
for (let y = 1; y < 18; y += 2) {
  for (let x = 0; x < 820; x += 20 + rnd() * 90) {
    map += `<rect x="${x.toFixed(0)}" y="${y}" width="${(20 + rnd() * 70).toFixed(0)}" height="1" fill="${tints[Math.floor(rnd() * 6)]}" opacity=".6"/>`;
  }
}
map += '<rect x="0" y="9" width="1004" height="1" fill="#8f7f9c"/><rect x="402" y="16" width="46" height="2" fill="#3f87b0"/><rect x="0" y="11" width="900" height="5" fill="#858a94" opacity=".4"/>';
document.getElementById('map').innerHTML = `<svg viewBox="0 0 1090 19" preserveAspectRatio="none">${map}</svg>`;
```
